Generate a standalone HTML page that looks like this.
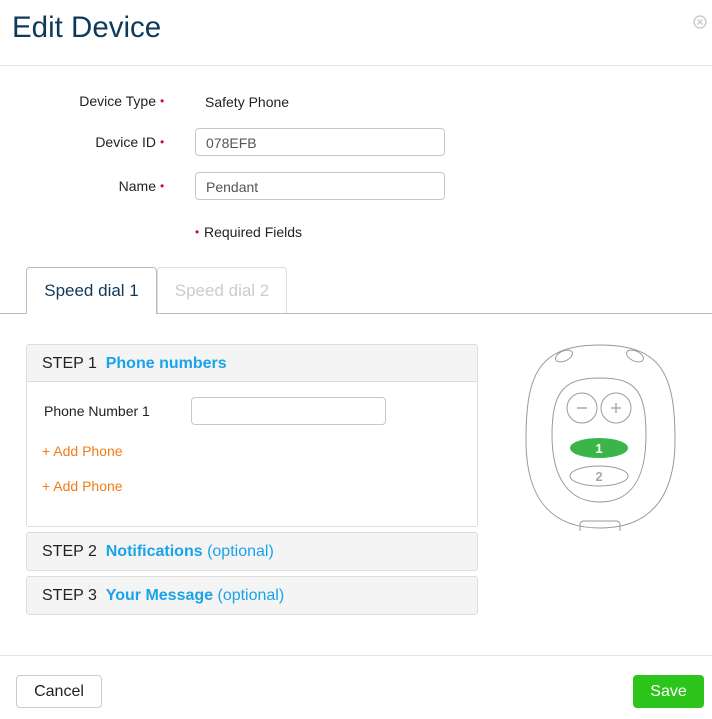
<!DOCTYPE html>
<html><head><style>
*{box-sizing:border-box;margin:0;padding:0}
body{width:712px;height:719px;background:#fff;font-family:"Liberation Sans",sans-serif;position:relative;overflow:hidden;color:#222}
.a{position:absolute}
.lbl{font-size:14px;color:#222;text-align:right;width:140px}
.dot{color:#c8102e;font-size:12px}
.inp{position:absolute;border:1px solid #c8c8c8;border-radius:4px;background:#fff;font-size:14px;color:#555;padding:6px 10px;height:28px}
.ph{position:absolute;left:26px;width:452px;border:1px solid #ddd;border-radius:3px;background:#f4f4f4}
.ph .h{height:37px;line-height:37px;padding-left:15px;font-size:16px;color:#222}
.ph b{color:#1aa3e8}
.ph i{font-style:normal;color:#1aa3e8}
</style></head><body>
<div class="a" style="left:12px;top:11px;font-size:29.5px;color:#0e3a5a">Edit Device</div>
<svg class="a" style="left:693px;top:15px" width="14" height="14"><circle cx="7" cy="7" r="6" fill="none" stroke="#ccc" stroke-width="1.5"/><path d="M4.5 4.5l5 5M9.5 4.5l-5 5" stroke="#ccc" stroke-width="1.5"/></svg>
<div class="a" style="left:0;top:65px;width:712px;height:1px;background:#e3e3e3"></div>

<div class="a lbl" style="left:16px;top:93px">Device Type</div><span class="a dot" style="left:160px;top:94px">•</span>
<div class="a" style="left:205px;top:94px;font-size:14px">Safety Phone</div>
<div class="a lbl" style="left:16px;top:134px">Device ID</div><span class="a dot" style="left:160px;top:135px">•</span>
<div class="inp" style="left:195px;top:128px;width:250px">078EFB</div>
<div class="a lbl" style="left:16px;top:178px">Name</div><span class="a dot" style="left:160px;top:179px">•</span>
<div class="inp" style="left:195px;top:172px;width:250px">Pendant</div>
<span class="a dot" style="left:195px;top:225px">•</span><div class="a" style="left:204px;top:224px;font-size:14px">Required Fields</div>

<div class="a" style="left:0;top:313px;width:712px;height:1px;background:#bbb"></div>
<div class="a" style="left:26px;top:267px;width:131px;height:47px;border:1px solid #bbb;border-bottom:none;border-radius:4px 4px 0 0;background:#fff;font-size:17px;color:#0e3a5a;text-align:center;line-height:46px">Speed dial 1</div>
<div class="a" style="left:157px;top:267px;width:130px;height:46px;border:1px solid #ddd;border-bottom:none;border-radius:4px 4px 0 0;font-size:17px;color:#ccc;text-align:center;line-height:46px">Speed dial 2</div>

<div class="ph" style="top:344px;height:183px">
<div class="h" style="border-bottom:1px solid #ddd">STEP 1&nbsp; <b>Phone numbers</b></div>
<div style="background:#fff;height:144px;position:relative">
<div class="a" style="left:17px;top:21px;font-size:14px">Phone Number 1</div>
<div class="inp" style="left:164px;top:15px;width:195px"></div>
<div class="a" style="left:15px;top:61px;font-size:14px;color:#f07c1a">+ Add Phone</div>
<div class="a" style="left:15px;top:96px;font-size:14px;color:#f07c1a">+ Add Phone</div>
</div></div>
<div class="ph" style="top:532px;height:39px"><div class="h">STEP 2&nbsp; <b>Notifications</b> <i>(optional)</i></div></div>
<div class="ph" style="top:576px;height:39px"><div class="h">STEP 3&nbsp; <b>Your Message</b> <i>(optional)</i></div></div>

<svg class="a" style="left:500px;top:330px" width="200" height="210" fill="none" stroke="#999" stroke-width="1">
<path d="M100 15C162 15 175 45 175 110C175 172 146 198 100 198C54 198 26 172 26 110C26 45 38 15 100 15Z"/>
<ellipse cx="64" cy="26" rx="9" ry="5" transform="rotate(-25 64 26)"/>
<ellipse cx="135" cy="26" rx="9" ry="5" transform="rotate(25 135 26)"/>
<path d="M100 48C135 48 146 60 146 105C146 150 130 172 100 172C70 172 52 150 52 105C52 60 65 48 100 48Z"/>
<circle cx="82" cy="78" r="15"/><circle cx="116" cy="78" r="15"/>
<path d="M77 78h10M111 78h10M116 73v10" stroke="#aaa" stroke-width="1.5"/>
<ellipse cx="99" cy="118" rx="29" ry="10" fill="#3bb54a" stroke="none"/>
<text x="99" y="123" fill="#fff" stroke="none" font-size="13" font-weight="bold" text-anchor="middle" font-family="Liberation Sans">1</text>
<ellipse cx="99" cy="146" rx="29" ry="10"/>
<text x="99" y="151" fill="#aaa" stroke="none" font-size="13" font-weight="bold" text-anchor="middle" font-family="Liberation Sans">2</text>
<path d="M80 201v-6q0-4 4-4h32q4 0 4 4v6"/>
</svg>

<div class="a" style="left:0;top:655px;width:712px;height:1px;background:#e3e3e3"></div>
<div class="a" style="left:16px;top:675px;width:86px;height:33px;border:1px solid #ccc;border-radius:4px;font-size:16px;text-align:center;line-height:31px;color:#222">Cancel</div>
<div class="a" style="left:633px;top:675px;width:71px;height:33px;background:#2dc41c;border-radius:4px;font-size:16px;text-align:center;line-height:33px;color:#fff">Save</div>
</body></html>
